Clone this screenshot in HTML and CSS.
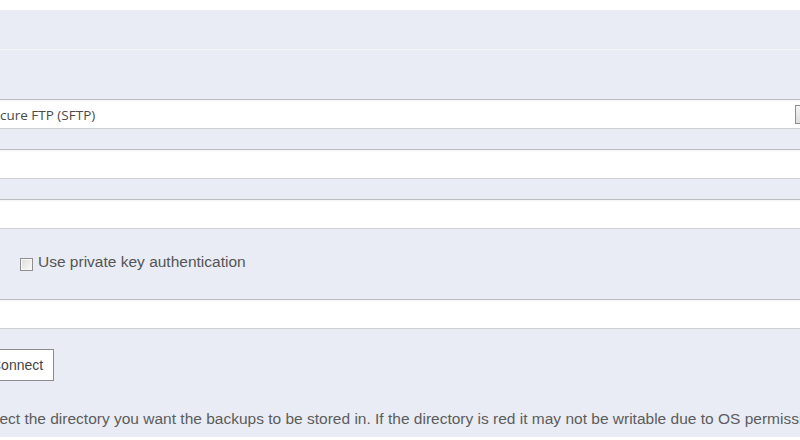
FILE: index.html
```html
<!DOCTYPE html>
<html>
<head>
<meta charset="utf-8">
<link rel="stylesheet" href="styles.css">
</head>
<body>
<div class="panel">
  <div class="row head"></div>
  <div class="form">
    <div class="field select">
      <span class="select-text">Secure FTP (SFTP)</span>
      <span class="select-btn"></span>
    </div>
    <div class="field input"></div>
    <div class="field input"></div>
    <div class="check-row">
      <label class="check"><span class="box"></span>Use private key authentication</label>
    </div>
    <div class="field input"></div>
    <div class="btn-row"><button class="btn">Connect</button></div>
    <p class="hint">Select the directory you want the backups to be stored in. If the directory is red it may not be writable due to OS permissions.</p>
  </div>
</div>
</body>
</html>
```
FILE: styles.css
```css
html, body {
  margin: 0;
  padding: 0;
  background: #ffffff;
  overflow: hidden;
  width: 800px;
  height: 440px;
}
.panel {
  margin-top: 10px;
  height: 427px;
  background: #e9ecf4;
  overflow: hidden;
}
.row.head {
  height: 39px;
  border-bottom: 1px solid #f3f5f9;
}
.form {
  margin-left: -16px;
  padding-top: 49px;
  display: flex;
  flex-direction: column;
}
.field {
  box-sizing: border-box;
  height: 30px;
  width: 840px;
  background: #ffffff;
  border: 1px solid #cfd0d3;
  border-top-color: #bdbec2;
  box-shadow: inset 0 1px 2px rgba(0,0,0,0.05);
}
.field + .field {
  margin-top: 20px;
}
.select {
  width: 836px;
  display: flex;
  align-items: center;
  justify-content: space-between;
  padding: 0 6px 0 0;
}
.select-text {
  font-family: "Open Sans", "DejaVu Sans", sans-serif;
  font-size: 13.5px;
  color: #4a4a4a;
  position: relative;
  top: 1px;
}
.select-btn {
  width: 18px;
  height: 19px;
  box-sizing: border-box;
  border: 1px solid #8e8e8e;
  background: linear-gradient(#f4f4f4, #dcdcdc);
}
.check-row {
  height: 70px;
  display: flex;
  align-items: center;
  padding-left: 36px;
}
.check {
  display: flex;
  align-items: center;
  font-family: "Liberation Sans", Arial, sans-serif;
  font-size: 15.5px;
  color: #555;
  position: relative;
  top: -2px;
}
.box {
  width: 11px;
  height: 11px;
  border: 1px solid #8f8f8f;
  background: linear-gradient(135deg, #dcdcdc, #fbfbfb);
  margin-right: 5px;
  margin-top: 4px;
  box-shadow: inset 0 0 0 1px #f7f7f7;
}
.btn-row {
  padding-top: 20px;
  margin-left: -1px;
}
.btn {
  box-sizing: border-box;
  height: 32px;
  width: 71px;
  background: #ffffff;
  border: 1px solid #8c8c8c;
  border-radius: 0;
  font-family: "Liberation Sans", Arial, sans-serif;
  font-size: 14px;
  color: #444;
  padding: 0 0 0 7px;
  text-align: left;
}
.hint {
  margin: 29px 0 0 -7px;
  font-family: "Liberation Sans", Arial, sans-serif;
  font-size: 15.5px;
  color: #5c5c5c;
  white-space: nowrap;
}
```
